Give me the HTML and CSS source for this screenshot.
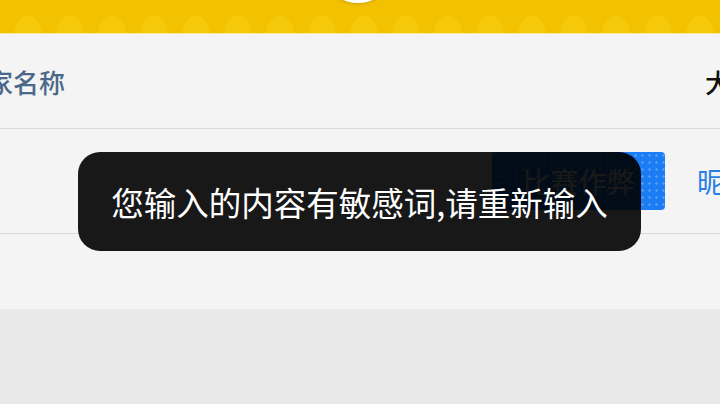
FILE: index.html
```html
<!DOCTYPE html>
<html>
<head>
<meta http-equiv="Content-Type" content="text/html; charset=utf-8" />
<title>比赛举报</title>
<link rel="stylesheet" href="styles.css">
</head>
<body>

<div class="top-bar">
	<div class="top-knob"></div>
</div>

<div class="panel">
	<div class="row row-head">
		<div class="cell-name">玩家名称</div>
		<div class="spacer"></div>
		<div class="cell-right">大区</div>
	</div>
	<div class="row row-item">
		<div class="spacer"></div>
		<a class="report-btn" href="#">比赛作弊</a>
		<a class="cell-nick" href="#">昵称</a>
	</div>
</div>

<div class="footer"></div>

<div class="toast">您输入的内容有敏感词,请重新输入</div>

</body>
</html>
```

FILE: styles.css
```css
html,body{
	margin: 0px;padding: 0px;
}
body{
	width: 720px;height: 404px;overflow: hidden;
	position: relative;
	background: #e8e9e8;
	font-family: "Noto Sans CJK SC", "Noto Sans", sans-serif;
}
a{text-decoration: none;}

/* 顶部黄色条 */
.top-bar{
	height: 33px;
	position: relative;
	background-color: #f2c100;
	background-image: radial-gradient(ellipse 14px 19px at 21px 34px, #f5c80a 96%, rgba(245,200,10,0) 100%);
	background-size: 42px 33px;
	background-position: 7px 0px;
	border-bottom: 1px solid #fbe7a0;
}
.top-knob{
	width: 56px;height: 40px;
	position: absolute;left: 330px;top: -37px;
	border-radius: 50%;
	background: #fff;
	box-shadow: 0 1px 3px rgba(160,110,0,0.35);
}

.panel{
	height: 275px;
	background: #f4f4f4;
}
.row{
	display: flex;align-items: center;
	overflow: hidden;
	border-bottom: 1px solid #d9d9d9;
}
.spacer{flex: 1;}

.row-head{height: 94px;}
.cell-name{
	margin-left: -39px;
	font-size: 26px;font-weight: 500;color: #4b6888;
}
.cell-right{
	width: 52px;margin-right: -37px;
	font-size: 26px;font-weight: 500;color: #111;
	white-space: nowrap;
}

.row-item{height: 104px;}
.report-btn{
	width: 173px;height: 58px;margin-right: 32px;
	display: flex;align-items: center;justify-content: center;
	border-radius: 4px;
	background-color: #1c7cf4;
	background-image: radial-gradient(circle, rgba(120,180,255,0.55) 1px, rgba(120,180,255,0) 1.5px);
	background-size: 7px 7px;
	font-size: 28px;color: #fff;
}
.cell-nick{
	width: 56px;margin-right: -33px;
	font-size: 28px;color: #2a7fe6;
	white-space: nowrap;
}

.footer{height: 95px;}

/* 提示框 */
.toast{
	width: 563px;height: 99px;
	position: absolute;left: 78px;top: 152px;
	display: flex;align-items: center;justify-content: center;
	border-radius: 22px;
	background: rgba(0,0,0,0.9);
	font-size: 32.5px;color: #fff;
	white-space: nowrap;
}
```
